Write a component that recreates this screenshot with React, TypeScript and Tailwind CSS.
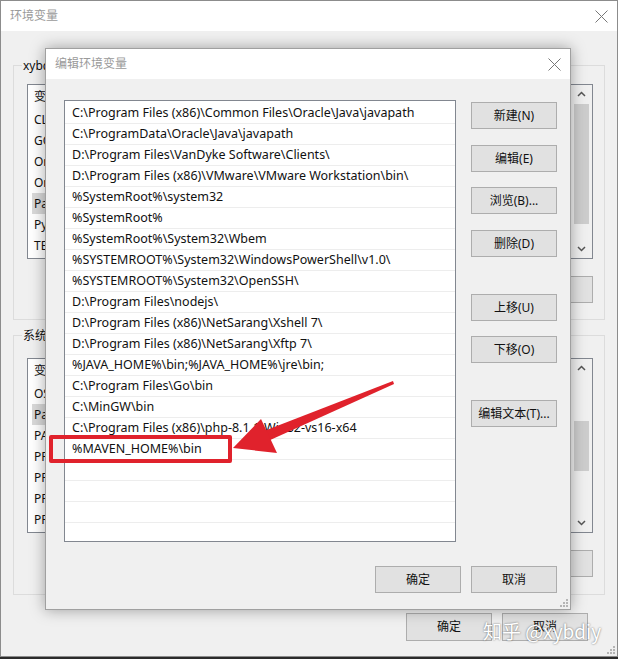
import React from "react"

const paths = [
    "C:\\Program Files (x86)\\Common Files\\Oracle\\Java\\javapath",
    "C:\\ProgramData\\Oracle\\Java\\javapath",
    "D:\\Program Files\\VanDyke Software\\Clients\\",
    "D:\\Program Files (x86)\\VMware\\VMware Workstation\\bin\\",
    "%SystemRoot%\\system32",
    "%SystemRoot%",
    "%SystemRoot%\\System32\\Wbem",
    "%SYSTEMROOT%\\System32\\WindowsPowerShell\\v1.0\\",
    "%SYSTEMROOT%\\System32\\OpenSSH\\",
    "D:\\Program Files\\nodejs\\",
    "D:\\Program Files (x86)\\NetSarang\\Xshell 7\\",
    "D:\\Program Files (x86)\\NetSarang\\Xftp 7\\",
    "%JAVA_HOME%\\bin;%JAVA_HOME%\\jre\\bin;",
    "C:\\Program Files\\Go\\bin",
    "C:\\MinGW\\bin",
    "C:\\Program Files (x86)\\php-8.1.1-Win32-vs16-x64",
    "%MAVEN_HOME%\\bin",
    "", "", "", "",
]

const userVars = ["CLASSPATH", "GOPATH", "OneDrive", "OneDriveConsumer", "Path", "PyCharm Community Edition", "TEMP"]
const sysVars = ["OS", "Path", "PATHEXT", "PROCESSOR_ARCHITECTURE", "PROCESSOR_IDENTIFIER", "PROCESSOR_LEVEL", "PROCESSOR_REVISION"]

const font = "font-['Segoe_UI','Noto_Sans','Noto_Sans_CJK_SC',sans-serif]"

function CloseX({ color = "#666" }: { color?: string }) {
    return (
        <svg width="13" height="13" viewBox="0 0 13 13" fill="none" stroke={color} strokeWidth="1">
            <path d="M0.5 0.5L12.5 12.5M12.5 0.5L0.5 12.5" />
        </svg>
    )
}

function Btn({ label, className = "" }: { label: string; className?: string }) {
    return (
        <div className={`w-[86px] h-[27px] flex items-center justify-center bg-[#e1e1e1] border border-[#adadad] text-[12px] text-[#111] ${className}`}>
            {label}
        </div>
    )
}

function Grip() {
    return (
        <svg width="9" height="9" viewBox="0 0 9 9" fill="#b5b5b5">
            <rect x="7" y="1" width="2" height="2" />
            <rect x="4" y="4" width="2" height="2" />
            <rect x="7" y="4" width="2" height="2" />
            <rect x="1" y="7" width="2" height="2" />
            <rect x="4" y="7" width="2" height="2" />
            <rect x="7" y="7" width="2" height="2" />
        </svg>
    )
}

function ScrollBar({ thumbTop, thumbH }: { thumbTop: number; thumbH: number }) {
    return (
        <div className="w-[21px] h-full bg-[#f0f0f0] flex flex-col items-center relative">
            <svg className="mt-[6px]" width="9" height="6" viewBox="0 0 9 6" fill="none" stroke="#555" strokeWidth="1.5">
                <path d="M1 5L4.5 1.5L8 5" />
            </svg>
            <div className="absolute left-[3px] w-[15px] bg-[#cdcdcd]" style={{ top: thumbTop, height: thumbH }} />
            <svg className="mt-auto mb-[6px]" width="9" height="6" viewBox="0 0 9 6" fill="none" stroke="#555" strokeWidth="1.5">
                <path d="M1 1L4.5 4.5L8 1" />
            </svg>
        </div>
    )
}

function VarList({ items, thumbTop, thumbH }: { items: string[]; thumbTop: number; thumbH: number }) {
    return (
        <div className="w-[566px] h-[175px] bg-white border border-[#828790] flex">
            <div className="flex-1 flex flex-col text-[12px] text-[#111]">
                <div className="h-[24px] flex items-center pl-[6px]">变量</div>
                {items.map((v, i) => (
                    <div key={i} className={`h-[21px] flex items-center pl-[2px] ml-[4px] ${v === "Path" ? "bg-[#d9d9d9]" : ""}`}>
                        {v}
                    </div>
                ))}
            </div>
            <ScrollBar thumbTop={thumbTop} thumbH={thumbH} />
        </div>
    )
}

export default function App() {
    return (
        <div className={`w-[618px] h-[659px] relative overflow-hidden bg-[#f0f0f0] ${font}`}>
            {/* background window: 环境变量 */}
            <div className="w-[618px] h-[657px] border border-[#8c8c8c] flex flex-col">
                <div className="h-[30px] bg-white flex items-center justify-between pl-[9px] pr-[9px]">
                    <span className="text-[12px] text-[#9a9a9a]">环境变量</span>
                    <CloseX color="#777" />
                </div>
                <div className="flex flex-col pl-[12px] pr-[12px]">
                    <div className="mt-[34px] h-[255px] border border-[#dcdcdc] relative pl-[13px] pt-[18px]">
                        <span className="absolute -top-[9px] left-[8px] bg-[#f0f0f0] px-[1px] text-[12px] text-[#111]">xybdiy 的用户变量(U)</span>
                        <VarList items={userVars} thumbTop={19} thumbH={120} />
                        <div className="mt-[17px] flex justify-end gap-[10px] pr-[11px]">
                            <Btn label="新建(N)..." />
                            <Btn label="编辑(E)..." />
                            <Btn label="删除(D)" />
                        </div>
                    </div>
                    <div className="mt-[15px] h-[260px] border border-[#dcdcdc] relative pl-[13px] pt-[22px]">
                        <span className="absolute -top-[9px] left-[8px] bg-[#f0f0f0] px-[1px] text-[12px] text-[#111]">系统变量(S)</span>
                        <VarList items={sysVars} thumbTop={62} thumbH={50} />
                        <div className="mt-[17px] flex justify-end gap-[10px] pr-[11px]">
                            <Btn label="新建(W)..." />
                            <Btn label="编辑(I)..." />
                            <Btn label="删除(L)" />
                        </div>
                    </div>
                    <div className="mt-[18px] flex justify-end gap-[10px] pr-[17px]">
                        <Btn label="确定" className="h-[28px]" />
                        <Btn label="取消" className="h-[28px]" />
                    </div>
                </div>
                <div className="mt-auto self-end mr-[2px] mb-[2px]">
                    <Grip />
                </div>
            </div>
            <div className="h-[2px] bg-[#2b2b2b]" />

            {/* dialog: 编辑环境变量 */}
            <div className="absolute left-[45px] top-[48px] w-[526px] h-[562px] bg-[#f0f0f0] border border-[#a0a0a0] shadow-[0_0_14px_rgba(0,0,0,0.35)] flex flex-col">
                <div className="h-[30px] bg-white flex items-center justify-between pl-[9px] pr-[9px]">
                    <span className="text-[12px] text-[#9a9a9a]">编辑环境变量</span>
                    <CloseX color="#777" />
                </div>
                <div className="flex pl-[18px] pt-[21px] gap-[15px]">
                    <div className="w-[392px] h-[442px] bg-white border border-[#828790] pt-[2px] overflow-hidden">
                        {paths.map((p, i) => (
                            <div key={i} className="h-[21px] flex items-center pl-[7px] border-b border-[#ededed] text-[12.5px] text-[#111] whitespace-nowrap">
                                {p}
                            </div>
                        ))}
                    </div>
                    <div className="flex flex-col pt-[2px]">
                        <Btn label="新建(N)" />
                        <Btn label="编辑(E)" className="mt-[16px]" />
                        <Btn label="浏览(B)..." className="mt-[15px]" />
                        <Btn label="删除(D)" className="mt-[16px]" />
                        <Btn label="上移(U)" className="mt-[37px]" />
                        <Btn label="下移(O)" className="mt-[15px]" />
                        <Btn label="编辑文本(T)..." className="mt-[37px]" />
                    </div>
                </div>
                <div className="mt-[24px] flex justify-end gap-[10px] pr-[13px]">
                    <Btn label="确定" />
                    <Btn label="取消" />
                </div>
                <div className="mt-auto self-end mr-[2px] mb-[2px]">
                    <Grip />
                </div>
            </div>

            {/* annotation */}
            <div className="absolute left-[49px] top-[435px] w-[183px] h-[28px] border-[4px] border-[#e0222c] rounded-[2px]" />
            <svg className="absolute left-0 top-0" width="618" height="659" viewBox="0 0 618 659">
                <polygon points="393,381 394,384 268,441 264,431" fill="#e0222c" />
                <polygon points="233,448 261,419 277,453" fill="#e0222c" />
            </svg>

            <div className="absolute left-[483px] top-[617px] text-[19px] text-white font-['Noto_Sans_CJK_SC',sans-serif] [text-shadow:0_0_2px_rgba(0,0,0,0.6)] whitespace-nowrap">
                知乎 @xybdiy
            </div>
        </div>
    )
}
